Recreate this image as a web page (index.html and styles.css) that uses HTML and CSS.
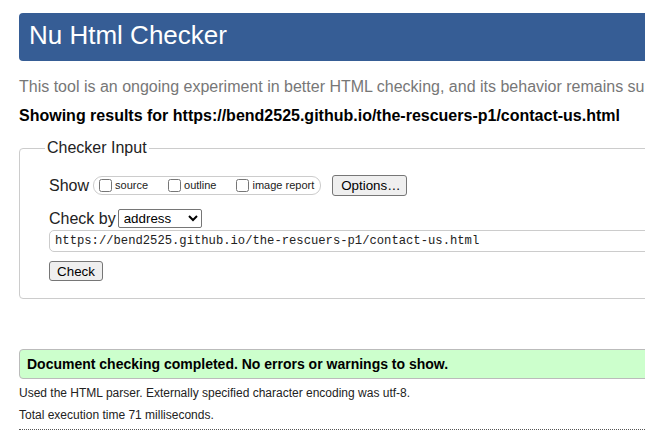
FILE: index.html
```html
<!DOCTYPE html>
<html lang="en">
<head>
<meta charset="utf-8">
<title>Nu Html Checker</title>
<link rel="stylesheet" href="styles.css">
</head>
<body>
<div class="page">
  <h1 class="masthead">Nu Html Checker</h1>
  <p class="intro">This tool is an ongoing experiment in better HTML checking, and its behavior remains subject to change</p>
  <p class="results-for">Showing results for https://bend2525.github.io/the-rescuers-p1/contact-us.html</p>
  <form class="checker">
    <fieldset class="checker-input">
      <legend class="legend">Checker Input</legend>
      <div class="row row-show">
        <span class="row-label">Show</span>
        <span class="pill">
          <label class="opt"><input type="checkbox" class="cb"><span>source</span></label>
          <label class="opt"><input type="checkbox" class="cb"><span>outline</span></label>
          <label class="opt opt-last"><input type="checkbox" class="cb"><span>image report</span></label>
        </span>
        <button type="button" class="btn btn-options">Options…</button>
      </div>
      <div class="row row-checkby">
        <span class="row-label">Check by</span>
        <select class="select">
          <option>address</option>
        </select>
      </div>
      <input class="url" type="text" value="https://bend2525.github.io/the-rescuers-p1/contact-us.html">
      <div class="row row-submit">
        <button type="button" class="btn btn-check">Check</button>
      </div>
    </fieldset>
  </form>
  <p class="success">Document checking completed. No errors or warnings to show.</p>
  <p class="details">Used the HTML parser. Externally specified character encoding was utf-8.</p>
  <p class="details">Total execution time 71 milliseconds.</p>
  <hr class="dotted">
</div>
</body>
</html>
```

FILE: styles.css
```css
html, body {
  margin: 0;
  padding: 0;
  overflow: hidden;
  background: #fff;
}

body {
  font-family: "Liberation Sans", Arial, sans-serif;
  color: #000;
}

.page {
  width: 1000px;
  padding-left: 19px;
  display: flex;
  flex-direction: column;
}

.masthead {
  margin: 13px 0 0;
  height: 48px;
  box-sizing: border-box;
  padding: 0 0 4px 10px;
  background: #365d95;
  color: #fff;
  font-weight: normal;
  font-size: 26px;
  line-height: 44px;
  border-radius: 4px;
  white-space: nowrap;
}

.intro {
  margin: 16px 0 0;
  font-size: 16px;
  line-height: 20px;
  color: #777;
  white-space: nowrap;
}

.results-for {
  margin: 9px 0 0;
  font-size: 16px;
  line-height: 20px;
  font-weight: bold;
  white-space: nowrap;
}

.checker {
  margin: 12px 0 0;
}

.checker-input {
  margin: 0;
  padding: 17px 29px 17px 29px;
  border: 1px solid #ccc;
  border-radius: 4px;
  display: flex;
  flex-direction: column;
  align-items: flex-start;
}

.legend {
  margin-left: -4px;
  padding: 0 2px;
  font-size: 16px;
  line-height: 20px;
  color: #222;
}

.row {
  display: flex;
  align-items: center;
}

.row-label {
  font-size: 16px;
  line-height: 20px;
  color: #222;
}

.row-show {
  height: 21px;
}

.row-show .row-label {
  margin-right: 4px;
}

.pill {
  display: inline-flex;
  align-items: center;
  height: 19px;
  box-sizing: border-box;
  border: 1px solid #ccc;
  border-radius: 9px;
  padding: 0 6px 0 1px;
}

.opt {
  display: inline-flex;
  align-items: center;
  font-size: 11px;
  line-height: 13px;
  color: #222;
  margin-right: 16px;
}

.opt-last {
  margin-right: 0;
}

.cb {
  width: 13px;
  height: 13px;
  margin: 0 3px 0 4px;
}

.btn {
  font-family: "Liberation Sans", Arial, sans-serif;
  font-size: 13.33px;
  color: #000;
  background: #efefef;
  border: 1px solid #767676;
  border-radius: 3px;
  height: 21px;
  line-height: 17px;
  box-sizing: border-box;
}

.btn-options {
  margin-left: 11px;
  width: 75px;
  padding: 0 8px;
}

.row-checkby {
  margin-top: 13px;
  height: 19px;
}

.row-checkby .row-label {
  margin-right: 2px;
}

.select {
  width: 84px;
  height: 19px;
  box-sizing: border-box;
  font-family: "Liberation Sans", Arial, sans-serif;
  font-size: 13.33px;
  color: #000;
  padding: 0 1px;
  border: 1px solid #767676;
  border-radius: 2px;
  background: #fff;
}

.url {
  margin-top: 2px;
  width: 700px;
  height: 22px;
  box-sizing: border-box;
  padding: 0 5px;
  border: 1px solid #ccc;
  border-radius: 5px;
  font-family: "Liberation Mono", "DejaVu Sans Mono", monospace;
  font-size: 12.2px;
  color: #222;
  background: #fff;
}

.row-submit {
  margin-top: 9px;
}

.btn-check {
  width: 54px;
  height: 20px;
  padding: 0 7px;
}

.success {
  margin: 50px 0 0;
  height: 30px;
  box-sizing: border-box;
  border: 1px solid #bbb;
  border-radius: 4px;
  background: #ccffcc;
  padding: 0 7px;
  font-size: 14px;
  line-height: 28px;
  font-weight: bold;
  white-space: nowrap;
}

.details {
  margin: 6px 0 0;
  font-size: 12px;
  line-height: 16px;
  color: #222;
  white-space: nowrap;
}

.dotted {
  margin: 6px 0 0;
  height: 0;
  border: 0;
  border-top: 1px dotted #555;
}
```
